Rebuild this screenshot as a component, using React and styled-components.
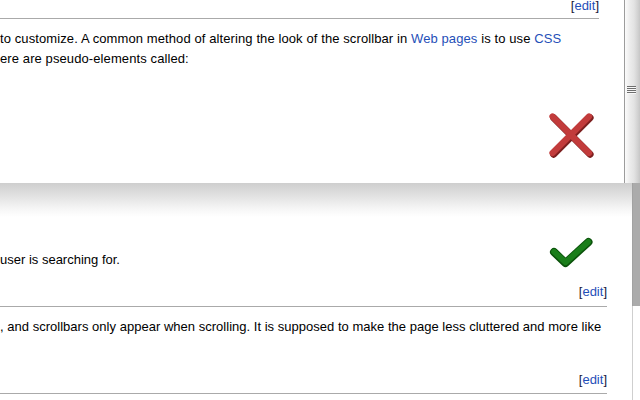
import React from 'react';
import styled, { createGlobalStyle } from 'styled-components';

const GlobalStyle = createGlobalStyle`
  * { box-sizing: border-box; }
  body {
    margin: 0;
    background: #ffffff;
    font-family: "Liberation Sans", Arial, sans-serif;
    font-size: 13px;
    color: #000000;
  }
`;

const Page = styled.div`
  width: 640px;
  height: 400px;
  display: flex;
  flex-direction: column;
  overflow: hidden;
`;

const Viewport = styled.div`
  height: ${({ $h }) => $h}px;
  flex-shrink: 0;
  display: flex;
  background: ${({ $shaded }) => $shaded ? 'linear-gradient(#cecece, #f6f6f6 26px, #ffffff 34px)' : '#ffffff'};
`;

const Content = styled.div`
  flex: 1;
  min-width: 0;
  padding-right: 25px;
  display: flex;
  flex-direction: column;
  overflow: hidden;
`;

const EditHeading = styled.div`
  height: ${({ $h }) => $h}px;
  flex-shrink: 0;
  display: flex;
  justify-content: flex-end;
  align-items: flex-end;
  padding-bottom: ${({ $pb = 8 }) => $pb}px;
  border-bottom: 1px solid #aaaaaa;
  line-height: 13px;
`;

const Bracket = styled.span`
  color: #1a1a3a;
`;

const Link = styled.a`
  color: #1f4fb8;
  text-decoration: none;
`;

const Paragraph = styled.p`
  margin: 10px 0 0;
  line-height: 20px;
  white-space: nowrap;
  letter-spacing: ${({ $ls = 0 }) => $ls}px;
`;

const IconRow = styled.div`
  display: flex;
  justify-content: flex-end;
  margin-top: ${({ $top }) => $top}px;
  padding-right: ${({ $right }) => $right}px;
`;

const CaptionRow = styled.div`
  height: 87px;
  flex-shrink: 0;
  display: flex;
  justify-content: space-between;
  align-items: flex-end;
  line-height: 20px;
  white-space: nowrap;
`;

const CheckWrap = styled.div`
  margin: 0 14px 2px 0;
  display: flex;
`;

// old style scrollbar, thumb fills the visible part
const ClassicScrollbar = styled.div`
  width: 16px;
  flex-shrink: 0;
  border-left: 1px solid #9c9c9c;
  background: linear-gradient(to right, #fbfbfb 0, #ededed 30%, #e3e3e3 60%, #d2d2d2 85%, #c6c6c6 100%);
  display: flex;
  align-items: center;
  padding: 0 0 4px 2px;
`;

const Grip = styled.div`
  width: 9px;
  height: 8px;
  background: repeating-linear-gradient(#6e6e6e 0, #6e6e6e 1px, #f8f8f8 1px, #f8f8f8 2px);
`;

const OverlayScrollbar = styled.div`
  width: 8px;
  flex-shrink: 0;
  display: flex;
  flex-direction: column;
`;

const OverlayThumb = styled.div`
  height: 123px;
  background: #ababab;
  border-left: 1px solid #a2a2a2;
`;

const OverlayTrack = styled.div`
  flex: 1;
  border-left: 1px solid #cfcfcf;
  background: #ffffff;
`;

const Edit = () => (
  <span>
    <Bracket>[</Bracket><Link href="#">edit</Link><Bracket>]</Bracket>
  </span>
);

const CrossIcon = () => (
  <svg width="46" height="46" viewBox="0 0 46 46">
    <g strokeWidth="7" strokeLinecap="round" fill="none">
      <path d="M5 5 L41.5 41.5 M41.5 5 L5 41.5" stroke="#7d1f1f" transform="translate(0.6 0.8)" />
      <path d="M4.5 4.5 L41 41 M41 4.5 L4.5 41" stroke="#c23b3b" strokeWidth="6.2" />
    </g>
  </svg>
);

const CheckIcon = () => (
  <svg width="44" height="31" viewBox="0 0 44 31">
    <g fill="none" strokeLinecap="round" strokeLinejoin="round">
      <path d="M5 15 L16.5 26 L39.5 5" stroke="#0b520b" strokeWidth="8" />
      <path d="M5 14.6 L16.5 25.4 L39.3 4.8" stroke="#1a7e1a" strokeWidth="5.6" />
    </g>
  </svg>
);

export default function App() {
  return (
    <Page>
      <GlobalStyle />
      <Viewport $h={183}>
        <Content>
          <EditHeading $h={19} $pb={6}><Edit /></EditHeading>
          <Paragraph $ls={0.1}>
            to customize. A common method of altering the look of the scrollbar in <Link href="#">Web pages</Link> is to use <Link href="#">CSS</Link>
            <br />
            ere are pseudo-elements called:
          </Paragraph>
          <IconRow $top={43} $right={5}><CrossIcon /></IconRow>
        </Content>
        <ClassicScrollbar><Grip /></ClassicScrollbar>
      </Viewport>
      <Viewport $h={217} $shaded>
        <Content>
          <CaptionRow>
            <span>user is searching for.</span>
            <CheckWrap><CheckIcon /></CheckWrap>
          </CaptionRow>
          <EditHeading $h={37}><Edit /></EditHeading>
          <Paragraph $ls={0.02}>
            , and scrollbars only appear when scrolling. It is supposed to make the page less cluttered and more like
          </Paragraph>
          <EditHeading $h={57} $pb={7}><Edit /></EditHeading>
        </Content>
        <OverlayScrollbar>
          <OverlayThumb />
          <OverlayTrack />
        </OverlayScrollbar>
      </Viewport>
    </Page>
  );
}
